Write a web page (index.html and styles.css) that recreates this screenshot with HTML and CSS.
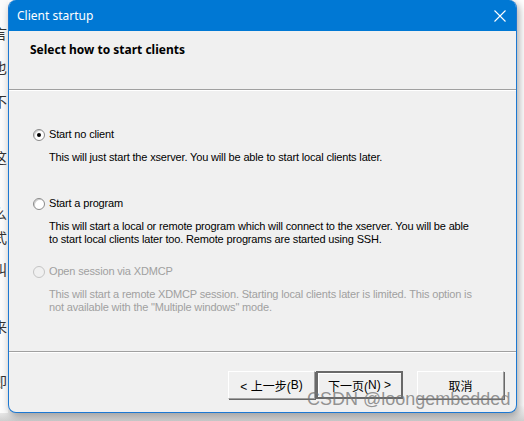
FILE: index.html
```html
<!DOCTYPE html>
<html>
<head>
<meta charset="utf-8">
<link rel="stylesheet" href="styles.css">
</head>
<body>
<div class="page">
  <div class="strip">
    <div class="ch c1">言</div>
    <div class="ch c2">也</div>
    <div class="ch c3">不</div>
    <div class="ch c4">这</div>
    <div class="ch c5">么</div>
    <div class="ch c6">式</div>
    <div class="ch c7">叫</div>
    <div class="ch c8">来</div>
    <div class="ch c9">即</div>
  </div>
  <div class="window">
    <div class="titlebar">
      <span class="title">Client startup</span>
      <svg class="close" width="12" height="12" viewBox="0 0 12 12"><path d="M0.5 0.5 L11.5 11.5 M11.5 0.5 L0.5 11.5" stroke="#fff" stroke-width="1.1" fill="none"/></svg>
    </div>
    <div class="client">
      <div class="header">Select how to start clients</div>
      <div class="sep"></div>
      <div class="body">
        <div class="opt opt1">
          <div class="label"><span class="radio checked"></span>Start no client</div>
          <div class="desc">This will just start the xserver. You will be able to start local clients later.</div>
        </div>
        <div class="opt opt2">
          <div class="label"><span class="radio"></span>Start a program</div>
          <div class="desc">This will start a local or remote program which will connect to the xserver. You will be able<br>to start local clients later too. Remote programs are started using SSH.</div>
        </div>
        <div class="opt opt3 disabled">
          <div class="label"><span class="radio"></span>Open session via XDMCP</div>
          <div class="desc">This will start a remote XDMCP session. Starting local clients later is limited. This option is<br>not available with the "Multiple windows" mode.</div>
        </div>
      </div>
      <div class="sep sep2"></div>
      <div class="buttons">
        <div class="btn">&lt; 上一步(<u>B</u>)</div>
        <div class="btn default">下一页(<u>N</u>) &gt;</div>
        <div class="btn cancel">取消</div>
      </div>
      <div class="watermark">CSDN @loongembedded</div>
    </div>
  </div>
</div>
</body>
</html>
```

FILE: styles.css
```css
html, body {
  margin: 0;
  padding: 0;
  width: 524px;
  height: 421px;
  overflow: hidden;
  background: #d9d9d9;
}
.page {
  display: flex;
  width: 524px;
  height: 421px;
  background: linear-gradient(#ffffff 0, #ffffff 405px, #cfcfcf 421px);
}
.strip {
  width: 8px;
  height: 413px;
  overflow: hidden;
  position: relative;
  flex: none;
  background: #fbfbfb;
}
.ch {
  position: absolute;
  left: -7px;
  font-family: "Noto Sans CJK SC", sans-serif;
  font-size: 14px;
  line-height: 16px;
  color: #333;
}
.c1 { top: 25px; }
.c2 { top: 59px; }
.c3 { top: 93px; }
.c4 { top: 149px; }
.c5 { top: 205px; }
.c6 { top: 229px; }
.c7 { top: 261px; }
.c8 { top: 318px; }
.c9 { top: 373px; }
.window {
  width: 507px;
  height: 412px;
  border: 1px solid #1c78d2;
  border-top: none;
  border-radius: 8px 8px 8px 8px;
  background: #f0f0f0;
  box-shadow: 2px 3px 8px rgba(0,0,0,0.35);
  overflow: hidden;
  position: relative;
  display: flex;
  flex-direction: column;
  flex: none;
}
.titlebar {
  height: 31px;
  background: #0078d4;
  display: flex;
  align-items: center;
  justify-content: space-between;
  padding: 0 10px 0 8px;
  flex: none;
}
.title {
  font-family: "Segoe UI", "Noto Sans", sans-serif;
  font-size: 12px;
  color: #ffffff;
  margin-top: -1px;
}
.close { margin-top: 0; }
.client {
  flex: 1;
  display: flex;
  flex-direction: column;
  font-family: "Liberation Sans", Arial, sans-serif;
  font-size: 11px;
  letter-spacing: -0.16px;
  color: #000;
  position: relative;
}
.header {
  height: 58px;
  box-sizing: border-box;
  padding: 11px 0 0 21px;
  font-family: "Segoe UI", "Noto Sans", sans-serif;
  font-weight: bold;
  font-size: 12px;
  letter-spacing: 0;
  line-height: 16px;
}
.sep {
  height: 1px;
  background: #a0a0a0;
  border-bottom: 1px solid #ffffff;
  flex: none;
}
.body {
  height: 260px;
  padding-left: 24px;
  box-sizing: border-box;
}
.opt { line-height: 13px; }
.opt1 { margin-top: 37px; }
.opt2 { margin-top: 33px; }
.opt3 { margin-top: 19px; }
.label {
  display: flex;
  align-items: center;
  height: 13px;
}
.radio {
  width: 10px;
  height: 10px;
  border-radius: 50%;
  border: 1px solid #8a8a8a;
  background: #ffffff;
  margin-right: 4px;
  box-sizing: content-box;
  position: relative;
  box-shadow: inset 1px 1px 0 #cfcfcf;
}
.radio.checked::after {
  content: "";
  position: absolute;
  left: 3px;
  top: 3px;
  width: 4px;
  height: 4px;
  border-radius: 50%;
  background: #000;
}
.desc {
  margin-top: 10px;
  padding-left: 16px;
}
.disabled { color: #a0a0a0; }
.disabled .radio { border-color: #c4c4c4; background: #f0f0f0; box-shadow: none; }
.buttons {
  display: flex;
  padding: 18px 0 0 219px;
}
.btn {
  width: 87px;
  height: 28px;
  box-sizing: border-box;
  border-top: 1px solid #ffffff;
  border-left: 1px solid #ffffff;
  border-right: 1px solid #a0a0a0;
  border-bottom: 1px solid #a0a0a0;
  box-shadow: 1px 1px 0 #696969;
  background: #f0f0f0;
  display: flex;
  align-items: center;
  justify-content: center;
  font-family: "Liberation Sans", "Noto Sans CJK SC", sans-serif;
  font-size: 12px;
  letter-spacing: 0;
  color: #000;
}
.btn u { text-decoration: none; }
.btn.default {
  margin-left: 1px;
  border: 2px solid #696969;
  box-shadow: inset 1px 1px 0 #ffffff;
}
.btn.cancel { margin-left: 14px; }
.watermark {
  position: absolute;
  left: 298px;
  top: 358px;
  font-family: "Liberation Sans", Arial, sans-serif;
  font-size: 18px;
  letter-spacing: 0;
  color: rgba(115,115,115,0.75);
  white-space: nowrap;
}
```
